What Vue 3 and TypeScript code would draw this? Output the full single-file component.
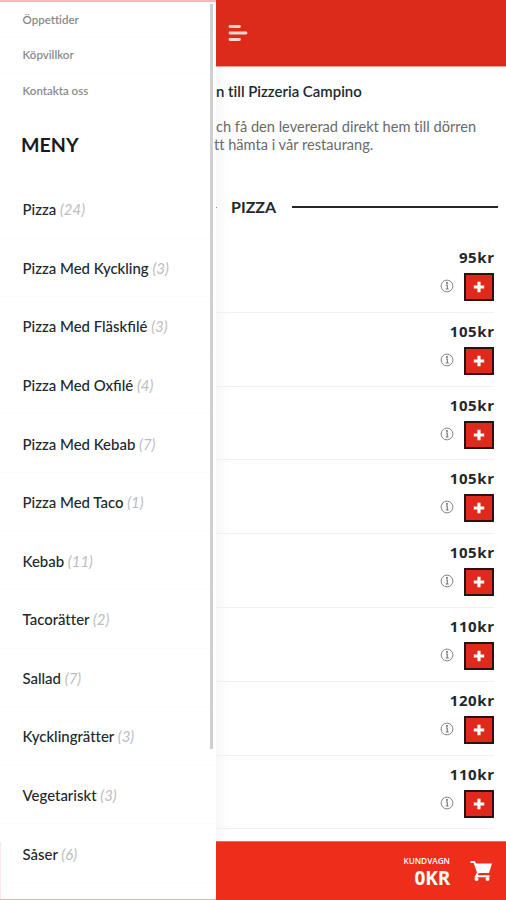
<script setup lang="ts">
interface Category {
  name: string
  count: number
}

const links: string[] = ['Öppettider', 'Köpvillkor', 'Kontakta oss']

const categories: Category[] = [
  { name: 'Pizza', count: 24 },
  { name: 'Pizza Med Kyckling', count: 3 },
  { name: 'Pizza Med Fläskfilé', count: 3 },
  { name: 'Pizza Med Oxfilé', count: 4 },
  { name: 'Pizza Med Kebab', count: 7 },
  { name: 'Pizza Med Taco', count: 1 },
  { name: 'Kebab', count: 11 },
  { name: 'Tacorätter', count: 2 },
  { name: 'Sallad', count: 7 },
  { name: 'Kycklingrätter', count: 3 },
  { name: 'Vegetariskt', count: 3 },
  { name: 'Såser', count: 6 },
]

const prices: number[] = [95, 105, 105, 105, 105, 110, 120, 110]

// Only the "fi" pair is joined; "tt" stays as two letters.
const joined = (name: string): boolean => name.includes('fi')
</script>

<template>
  <div class="app">
    <aside class="drawer">
      <nav class="links">
        <a v-for="link in links" :key="link" class="link">{{ link }}</a>
      </nav>
      <h2 class="menu-title">MENY</h2>
      <ul class="categories">
        <li v-for="c in categories" :key="c.name" class="category" :class="{ joined: joined(c.name) }">
          <span>{{ c.name }} <em class="count">({{ c.count }})</em></span>
        </li>
      </ul>
      <div class="scrollbar"></div>
    </aside>

    <main class="page">
      <header class="topbar">
        <svg class="burger" width="20" height="18" viewBox="0 0 20 18">
          <path d="M2 2.500H11.500M2 9H18M2 15.500H11.500" fill="none" stroke="#fdd5d0" stroke-width="2.800" stroke-linecap="round" />
        </svg>
      </header>

      <section class="intro">
        <h1 class="welcome">n till Pizzeria Campino</h1>
        <p class="lead"><span class="line first">ch få den levererad direkt hem till dörren</span><span class="line second">tt hämta i vår restaurang.</span></p>
      </section>

      <div class="heading">
        <i class="dot"></i>
        <h3 class="heading-text">PIZZA</h3>
        <i class="rule"></i>
      </div>

      <div class="items">
        <article v-for="(price, i) in prices" :key="i" class="item">
          <div class="price">{{ price }}kr</div>
          <div class="actions">
            <svg class="info" width="14" height="14" viewBox="0 0 14 14">
              <circle cx="7" cy="7" r="5.9" fill="none" stroke="#858585" stroke-width="1" />
              <path d="M5.900 6H7.300V9.800M5.700 10H8.700" fill="none" stroke="#777" stroke-width="1.100" />
              <circle cx="7" cy="3.9" r="0.9" fill="#555" />
            </svg>
            <button class="add" aria-label="+">
              <svg width="12" height="12" viewBox="0 0 12 12">
                <path d="M6 0.800V11.200M0.800 6H11.200" stroke="#fff" stroke-width="3.100" />
              </svg>
            </button>
          </div>
        </article>
      </div>

      <footer class="cart">
        <div class="cart-text">
          <div class="cart-label">KUNDVAGN</div>
          <div class="cart-sum">0KR</div>
        </div>
        <svg class="cart-icon" width="24" height="24" viewBox="0 0 24 24">
          <path d="M0.500 3H4.300L8 13.500L6 17.200H19.500" fill="none" stroke="#fff" stroke-width="1.900" />
          <path d="M4.500 4.500H22L19 14H8Z" fill="#fff" />
          <circle cx="6.500" cy="20" r="2" fill="#fff" />
          <circle cx="17.500" cy="20" r="2" fill="#fff" />
        </svg>
      </footer>
    </main>
  </div>
</template>

<style>
body {
  margin: 0;
  background: #fff;
}
</style>

<style scoped>
.app {
  display: flex;
  width: 506px;
  height: 900px;
  overflow: hidden;
  background: #fff;
  font-family: Lato, "Liberation Sans", sans-serif;
  font-variant-ligatures: none;
  color: #20282c;
}
h1, h2, h3, p, ul {
  margin: 0;
  padding: 0;
}
.drawer {
  position: relative;
  box-sizing: border-box;
  width: 216px;
  height: 900px;
  flex: none;
  overflow: hidden;
  border-top: 2px solid #f6b9b7;
  border-bottom: 1px solid #f5a9ad;
  background: linear-gradient(#ffe6e9, #ffe6e9) 0 100% / 1px 57px no-repeat #fff;
}
.links {
  display: flex;
  flex-direction: column;
}
.link {
  box-sizing: border-box;
  height: 36px;
  padding-left: 22.5px;
  line-height: 35px;
  font-size: 11.5px;
  font-weight: 600;
  color: #8a8a8a;
  border-bottom: 1px solid #fcfcfc;
}
.link + .link {
  line-height: 34px;
}
.link:last-child {
  border-bottom: 0;
}
.menu-title {
  padding: 22px 0 0 21px;
  font-size: 19.6px;
  line-height: 26px;
  font-weight: 700;
  color: #161b1e;
}
.categories {
  padding-top: 22px;
  list-style: none;
}
.category {
  box-sizing: border-box;
  display: flex;
  align-items: center;
  height: 58.58px;
  padding: 1px 0 0 22.5px;
  font-size: 14.95px;
  font-weight: 500;
  white-space: nowrap;
  border-bottom: 1px solid #fcfcfc;
}
.joined {
  font-variant-ligatures: normal;
}
.count {
  font-weight: 400;
  color: #bdbdbd;
}
.scrollbar {
  position: absolute;
  top: 2px;
  right: 3px;
  width: 3px;
  height: 745px;
  background: #d0d0d0;
}
.page {
  display: flex;
  flex-direction: column;
  width: 290px;
  height: 900px;
  background: linear-gradient(90deg, #f7f7f7 0, #fdfdfd 9px, #fff 18px);
}
.topbar {
  box-sizing: border-box;
  flex: none;
  height: 67px;
  padding: 24px 0 0 12px;
  background: #dc2b1b;
  border-bottom: 1px solid #ee9c95;
}
.burger {
  display: block;
}
.intro {
  position: relative;
  flex: none;
  height: 129px;
}
.welcome {
  padding-top: 15px;
  font-size: 14.95px;
  line-height: 18px;
  font-weight: 600;
  white-space: nowrap;
}
.lead {
  padding-top: 18px;
  font-size: 14.6px;
  line-height: 18px;
  color: #6a6a6a;
}
.line {
  display: block;
  white-space: nowrap;
}
.second {
  margin-left: -2px;
}
.heading {
  display: flex;
  flex: none;
  align-items: center;
  height: 22px;
}
.dot {
  width: 1px;
  height: 1px;
  background: #888;
}
.heading-text {
  width: 61px;
  padding-left: 14px;
  font-size: 16px;
  line-height: 22px;
  font-weight: 700;
}
.rule {
  width: 206px;
  height: 2px;
  background: #262626;
}
.items {
  flex: none;
  height: 623px;
  padding-top: 21px;
  box-sizing: border-box;
}
.item {
  box-sizing: border-box;
  height: 73.8px;
  margin-right: 12px;
  padding-top: 8px;
  border-bottom: 1px solid #f0f0f0;
}
.price {
  margin-right: -0.6px;
  font-family: "Open Sans", sans-serif;
  font-size: 15px;
  line-height: 20px;
  font-weight: 700;
  letter-spacing: 0.6px;
  text-align: right;
}
.actions {
  display: flex;
  justify-content: flex-end;
  padding-top: 6px;
}
.info {
  margin: 6px 10px 0 0;
}
.add {
  box-sizing: border-box;
  display: flex;
  align-items: center;
  justify-content: center;
  width: 30px;
  height: 28px;
  padding: 0;
  background: #df291a;
  border: 2px solid #2b1110;
}
.cart {
  box-sizing: border-box;
  display: flex;
  flex: none;
  height: 59px;
  padding-right: 12px;
  justify-content: flex-end;
  color: #fff;
  background: #ef2d1b;
  border-top: 1px solid #f0675c;
  font-family: "Open Sans", sans-serif;
  text-align: right;
}
.cart-text {
  padding-top: 13px;
}
.cart-label {
  font-size: 8.2px;
  line-height: 11px;
  font-weight: 600;
}
.cart-sum {
  padding-top: 1px;
  font-size: 19px;
  line-height: 22px;
  font-weight: 700;
  letter-spacing: -0.2px;
}
.cart-icon {
  margin: 17px 0 0 20px;
}
</style>
